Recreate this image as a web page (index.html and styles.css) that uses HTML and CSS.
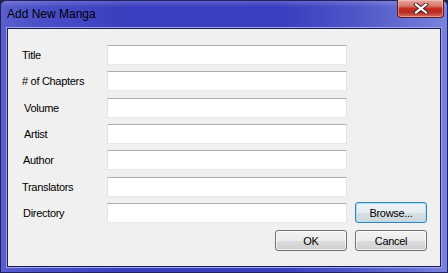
FILE: index.html
```html
<!DOCTYPE html>
<html>
<head>
<meta charset="utf-8">
<link rel="stylesheet" href="styles.css">
</head>
<body>
<div class="window">
  <div class="titlebar">
    <span class="title">Add New Manga</span>
    <div class="close-btn">
      <svg width="16" height="11" viewBox="0 0 16 11">
        <path d="M3 1.5 L13 9.5 M13 1.5 L3 9.5" stroke="#3a2020" stroke-width="4" stroke-linecap="square"/>
        <path d="M3 1.5 L13 9.5 M13 1.5 L3 9.5" stroke="#ffffff" stroke-width="2.2" stroke-linecap="square"/>
      </svg>
    </div>
  </div>
  <div class="client">
    <div class="form">
      <label class="lbl">Title</label>
      <div class="textbox"></div>
      <div></div>

      <label class="lbl">#&nbsp;of Chapters</label>
      <div class="textbox"></div>
      <div></div>

      <label class="lbl lbl-in2">Volume</label>
      <div class="textbox"></div>
      <div></div>

      <label class="lbl lbl-in2">Artist</label>
      <div class="textbox"></div>
      <div></div>

      <label class="lbl lbl-in1">Author</label>
      <div class="textbox"></div>
      <div></div>

      <label class="lbl">Translators</label>
      <div class="textbox"></div>
      <div></div>

      <label class="lbl lbl-in1">Directory</label>
      <div class="textbox"></div>
      <button class="btn btn-default">Browse...</button>

      <div></div>
      <button class="btn btn-ok">OK</button>
      <button class="btn btn-cancel">Cancel</button>
    </div>
  </div>
</div>
</body>
</html>
```
FILE: styles.css
```css
html, body {
  margin: 0;
  padding: 0;
  background: #1e2240;
}
.window {
  width: 448px;
  height: 273px;
  box-sizing: border-box;
  border-radius: 6px 6px 0 0;
  background:
    linear-gradient(to bottom, rgba(255,255,255,0.18) 0px, rgba(255,255,255,0) 6px),
    linear-gradient(to right, #5a5ece 0px, #4a4fc8 40px, #3b3fbf 120px, #3a3dbf 280px, #5057c9 360px, #7a84dc 448px);
  border: 1px solid #1f2260;
  display: flex;
  flex-direction: column;
  font-family: "Liberation Sans", Arial, sans-serif;
}
.titlebar {
  height: 27px;
  flex: none;
  display: flex;
  align-items: flex-start;
  padding-left: 6px;
}
.title {
  font-size: 12px;
  color: #000;
  margin-top: 6px;
}
.close-btn {
  margin-left: auto;
  margin-right: 3px;
  margin-top: -1px;
  width: 47px;
  height: 18px;
  box-sizing: border-box;
  border: 1px solid #5a1c1c;
  border-top: none;
  border-radius: 0 0 4px 4px;
  background: linear-gradient(to bottom, #e6a59b 0%, #d8776b 35%, #c42f22 50%, #b9271e 70%, #d36a5c 100%);
  box-shadow: inset 0 0 0 1px rgba(255,220,210,0.45);
  display: flex;
  align-items: center;
  justify-content: center;
}
.client {
  flex: 1;
  margin: 0 6px 5px 6px;
  background: #f0f0f0;
  border: 1px solid #1b1d5a;
  box-shadow: 0 0 0 1px #9ea6ea;
}
.form {
  display: grid;
  grid-template-columns: 77px 240px 72px;
  grid-auto-rows: 20px;
  column-gap: 8px;
  row-gap: 6.33px;
  padding: 16px 0 0 14px;
  align-items: center;
}
.lbl {
  font-size: 11px;
  letter-spacing: -0.3px;
  color: #000;
  white-space: nowrap;
}
.lbl-in1 { padding-left: 1px; }
.lbl-in2 { padding-left: 2px; }
.textbox {
  height: 20px;
  box-sizing: border-box;
  background: #fff;
  border: 1px solid #e2e3ea;
  border-top-color: #abadb3;
  border-bottom-color: #e3e9ef;
}
.btn {
  width: 72px;
  height: 21px;
  box-sizing: border-box;
  font-family: "Liberation Sans", Arial, sans-serif;
  font-size: 11px;
  letter-spacing: -0.3px;
  color: #000;
  padding: 0;
  border: 1px solid #707070;
  border-radius: 3px;
  background: linear-gradient(to bottom, #f2f2f2 0%, #ebebeb 50%, #dddddd 50%, #cfcfcf 100%);
  box-shadow: inset 0 0 0 1px rgba(255,255,255,0.7);
}
.btn-default {
  border-color: #3c7fb1;
  box-shadow: inset 0 0 0 1px #a6e3fa;
  background: linear-gradient(to bottom, #eef3f6 0%, #e6ecef 50%, #d9e0e4 50%, #cdd6dc 100%);
}
.btn-ok {
  justify-self: end;
  margin-top: 3px;
}
.btn-cancel {
  margin-top: 3px;
}
```
